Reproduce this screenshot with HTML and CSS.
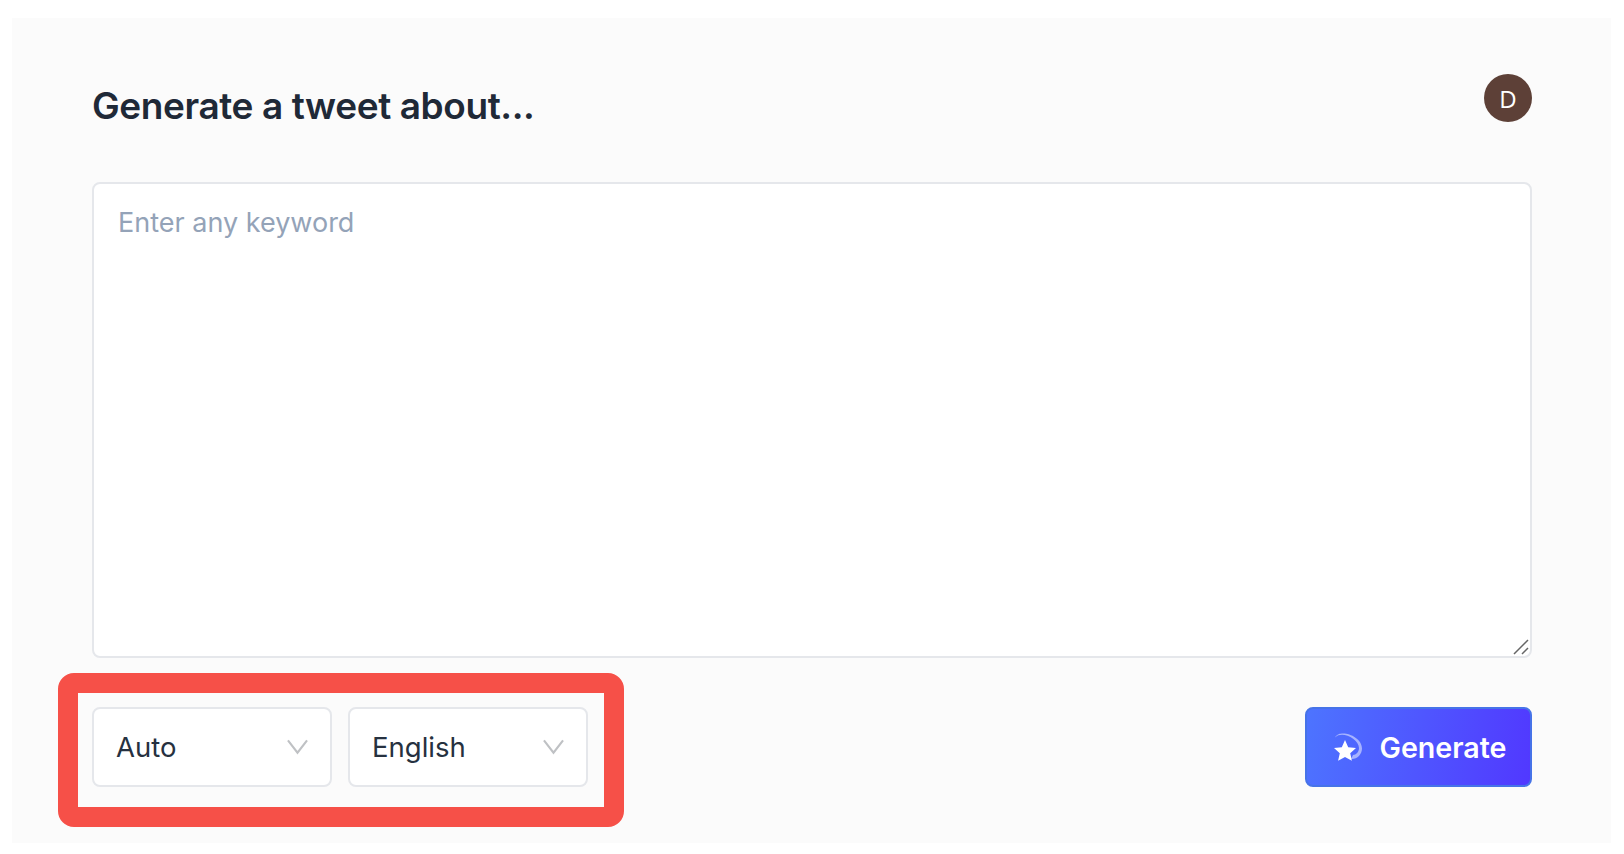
FILE: index.html
```html
<!DOCTYPE html>
<html lang="en">
<head>
<meta charset="utf-8">
<title>Generate a tweet</title>
<link rel="stylesheet" href="styles.css">
</head>
<body>
<main class="panel">
  <header class="top">
    <h1 class="title">Generate a tweet about...</h1>
    <div class="avatar">D</div>
  </header>
  <div class="field">
    <textarea class="keyword" placeholder="Enter any keyword"></textarea>
    <svg class="grip" viewBox="0 0 16 16"><path d="M1 15L15 1M9 15l6-6" fill="none" stroke="#666" stroke-width="1.500"/></svg>
  </div>
  <div class="controls">
    <div class="selects">
      <div class="select"><span>Auto</span>
        <svg class="chev" viewBox="0 0 22 16"><path d="M1 1l10 13L21 1" fill="none" stroke="#bfc1c4" stroke-width="2.200"/></svg>
      </div>
      <div class="select"><span>English</span>
        <svg class="chev" viewBox="0 0 22 16"><path d="M1 1l10 13L21 1" fill="none" stroke="#bfc1c4" stroke-width="2.200"/></svg>
      </div>
    </div>
    <button class="generate" type="button">
      <svg class="spark" viewBox="0 0 28 29">
        <path d="M0 4.500C2 1 5 .5 8 .5c8 0 19 6 19 15 0 6-5 11-11 10.500l2-4c3 0 6-3 6-7C24 8 14 1.800 7 1.800 4.500 1.800 2 2.500 0 4.500z" fill="#fff" fill-opacity=".5"/>
        <path d="M10 7l3.200 7.200 7.800.8-5.800 5.200 1.700 7.600L10 24 3.100 27.800l1.700-7.600L-1 15l7.800-.8z" fill="#fff"/>
      </svg>
      <span>Generate</span>
    </button>
  </div>
  <div class="highlight"></div>
</main>
</body>
</html>
```
FILE: styles.css
```css
* { box-sizing: border-box; }
html, body { margin: 0; background: #fff; }
body { padding: 18px 13px 11px 12px; height: 854px; font-family: Inter, "Liberation Sans", sans-serif; color: #1f2937; }
.panel { position: relative; height: 825px; background: #fbfbfb; padding: 56px 79px 0 80px; }
.top { display: flex; justify-content: space-between; align-items: flex-start; height: 108px; }
.title { margin: 10px 0 0; font-size: 37px; line-height: 44px; font-weight: 600; letter-spacing: -0.4px; color: #1f2937; }
.avatar { width: 48px; height: 48px; border-radius: 50%; background: #5d4037; color: #fff; display: flex; align-items: center; justify-content: center; font-family: "Open Sans", sans-serif; font-size: 24px; }
.field { position: relative; }
.keyword { display: block; width: 100%; height: 476px; background: #fff; border: 2px solid #e5e7eb; border-radius: 8px; padding: 23px 24px; font-family: Inter, sans-serif; font-size: 27px; line-height: 32px; outline: none; resize: none; }
.keyword::placeholder { color: #94a3b8; opacity: 1; }
.grip { position: absolute; right: 3px; bottom: 3px; width: 16px; height: 16px; }
.controls { display: flex; justify-content: space-between; align-items: center; margin-top: 49px; }
.selects { display: flex; gap: 16px; }
.select { width: 240px; height: 80px; background: #fff; border: 2px solid #e5e7eb; border-radius: 8px; display: flex; align-items: center; justify-content: space-between; padding: 0 22px; font-size: 27.500px; color: #263140; }
.chev { width: 21px; height: 16px; }
.generate { width: 227px; height: 80px; border: 2px solid #4673e8; border-radius: 8px; background: linear-gradient(100deg, #4d74ff, #5138ff); color: #fff; display: flex; align-items: center; justify-content: center; gap: 17px; font-family: Inter, sans-serif; font-size: 28.600px; font-weight: 600; padding: 0 0 0 4px; }
.spark { width: 28px; height: 29px; overflow: visible; }
.highlight { position: absolute; left: 46px; top: 655px; width: 566px; height: 154px; border: 20px solid #f65048; border-radius: 16px; pointer-events: none; }
```
